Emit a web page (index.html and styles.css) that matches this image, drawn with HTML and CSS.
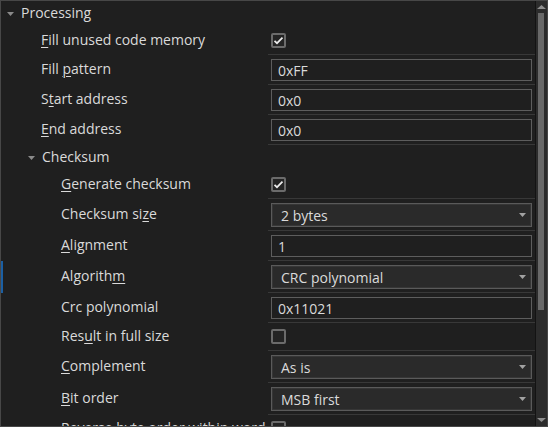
FILE: index.html
```html
<!DOCTYPE html>
<html>
<head>
<meta charset="utf-8">
<link rel="stylesheet" href="styles.css">
</head>
<body>
<div class="grid">
  <div class="rows">
    <div class="row header lvl0">
      <svg class="tri" width="7" height="4" viewBox="0 0 7 4"><polygon points="0,0 7,0 3.5,4"/></svg>
      <span class="htext">Processing</span>
    </div>

    <div class="row">
      <div class="label l1"><span><u>F</u>ill unused code memory</span></div>
      <div class="value v-check"><span class="cb on"><svg width="11" height="11" viewBox="0 0 11 11"><path d="M1.5 5.8 L4 8.2 L9.5 2.6"/></svg></span></div>
    </div>
    <div class="row">
      <div class="label l1"><span>Fill <u>p</u>attern</span></div>
      <div class="value"><div class="input">0xFF</div></div>
    </div>
    <div class="row">
      <div class="label l1"><span>S<u>t</u>art address</span></div>
      <div class="value"><div class="input">0x0</div></div>
    </div>
    <div class="row">
      <div class="label l1"><span><u>E</u>nd address</span></div>
      <div class="value"><div class="input">0x0</div></div>
    </div>

    <div class="row header lvl1">
      <svg class="tri" width="7" height="4" viewBox="0 0 7 4"><polygon points="0,0 7,0 3.5,4"/></svg>
      <span class="htext">Checksum</span>
    </div>

    <div class="row">
      <div class="label l2"><span><u>G</u>enerate checksum</span></div>
      <div class="value v-check"><span class="cb on"><svg width="11" height="11" viewBox="0 0 11 11"><path d="M1.5 5.8 L4 8.2 L9.5 2.6"/></svg></span></div>
    </div>
    <div class="row">
      <div class="label l2"><span>Checksum si<u>z</u>e</span></div>
      <div class="value v-combo"><div class="combo"><span>2 bytes</span><svg class="carrow" width="7" height="4" viewBox="0 0 7 4"><polygon points="0,0 7,0 3.5,4"/></svg></div></div>
    </div>
    <div class="row">
      <div class="label l2"><span><u>A</u>lignment</span></div>
      <div class="value"><div class="input">1</div></div>
    </div>
    <div class="row selected">
      <div class="label l2"><span>Algorith<u>m</u></span></div>
      <div class="value v-combo"><div class="combo"><span>CRC polynomial</span><svg class="carrow" width="7" height="4" viewBox="0 0 7 4"><polygon points="0,0 7,0 3.5,4"/></svg></div></div>
    </div>
    <div class="row">
      <div class="label l2"><span>Crc polynomial</span></div>
      <div class="value"><div class="input">0x11021</div></div>
    </div>
    <div class="row">
      <div class="label l2"><span>Res<u>u</u>lt in full size</span></div>
      <div class="value v-check"><span class="cb"></span></div>
    </div>
    <div class="row">
      <div class="label l2"><span><u>C</u>omplement</span></div>
      <div class="value v-combo"><div class="combo"><span>As is</span><svg class="carrow" width="7" height="4" viewBox="0 0 7 4"><polygon points="0,0 7,0 3.5,4"/></svg></div></div>
    </div>
    <div class="row">
      <div class="label l2"><span><u>B</u>it order</span></div>
      <div class="value v-combo"><div class="combo"><span>MSB first</span><svg class="carrow" width="7" height="4" viewBox="0 0 7 4"><polygon points="0,0 7,0 3.5,4"/></svg></div></div>
    </div>
    <div class="row">
      <div class="label l2"><span>Reverse byte order within word</span></div>
      <div class="value v-check"><span class="cb"></span></div>
    </div>
  </div>

  <div class="scrollbar">
    <div class="sb-btn up"><svg width="9" height="4" viewBox="0 0 9 4"><polygon points="0,4 9,4 4.5,0"/></svg></div>
    <div class="sb-track"><div class="sb-thumb"></div></div>
    <div class="sb-btn down"><svg width="9" height="4" viewBox="0 0 9 4"><polygon points="0,0 9,0 4.5,4"/></svg></div>
  </div>
</div>
</body>
</html>
```

FILE: styles.css
```css
html, body {
  margin: 0;
  padding: 0;
  background: #1f1f1f;
}

.grid {
  box-sizing: border-box;
  width: 548px;
  height: 427px;
  border: 1px solid #474747;
  background: #1f1f1f;
  display: flex;
  overflow: hidden;
  font-family: "Open Sans", "Noto Sans", sans-serif;
  font-size: 14px;
  color: #dadada;
}

.rows {
  flex: 1;
  display: flex;
  flex-direction: column;
  overflow: hidden;
}

.row {
  display: flex;
  align-items: stretch;
  flex-shrink: 0;
}

.header {
  box-sizing: border-box;
  height: 26px;
  align-items: center;
  gap: 7px;
}

.htext {
  margin-bottom: 3px;
}

.lvl0 { padding-left: 6px; }
.lvl1 { padding-left: 27px; }

.tri { fill: #8a8a8a; flex-shrink: 0; }

.label {
  width: 267px;
  flex-shrink: 0;
  display: flex;
  align-items: center;
  white-space: nowrap;
  overflow: hidden;
  box-sizing: border-box;
  padding-bottom: 3px;
}

.l1 { padding-left: 40px; }
.l2 { padding-left: 60px; }

.selected .label {
  box-shadow: inset 2px 0 0 #1b5fa3;
}

u {
  text-decoration: underline;
  text-underline-offset: 2px;
  text-decoration-thickness: 1px;
}

.value {
  flex: 1;
  border-bottom: 1px solid #383838;
  padding: 4px 3px 3px 3px;
  display: flex;
  flex-direction: column;
  justify-content: center;
}

.v-check {
  padding: 6px 3px 6px 3px;
}

.input {
  box-sizing: border-box;
  height: 22px;
  border: 1px solid #5d5d5d;
  background: #1f1f1f;
  padding-left: 6px;
  display: flex;
  align-items: center;
  color: #dadada;
}

.combo {
  box-sizing: border-box;
  height: 24px;
  border: 1px solid #5a5a5a;
  box-shadow: inset 0 0 0 1px #363636;
  background: #2a2a2a;
  padding: 0 5px 0 9px;
  display: flex;
  align-items: center;
  justify-content: space-between;
  color: #dadada;
}

.carrow { fill: #a2a2a2; }

.cb {
  box-sizing: border-box;
  width: 15px;
  height: 15px;
  border: 2px solid #6b6b6b;
  border-radius: 2px;
  background: #242424;
  display: flex;
  align-items: center;
  justify-content: center;
}

.cb svg path {
  fill: none;
  stroke: #ececec;
  stroke-width: 1.7;
}

.scrollbar {
  width: 11px;
  flex-shrink: 0;
  border-left: 1px solid #131313;
  background: #2c2c2c;
  display: flex;
  flex-direction: column;
}

.sb-btn {
  display: flex;
  justify-content: center;
  align-items: center;
  flex-shrink: 0;
}

.sb-btn svg { fill: #8e8e8e; }

.sb-btn.up { height: 12px; }
.sb-btn.down { height: 13px; }

.sb-track {
  flex: 1;
  padding-left: 2px;
  padding-right: 3px;
}

.sb-thumb {
  height: 297px;
  background: #696969;
}
```
